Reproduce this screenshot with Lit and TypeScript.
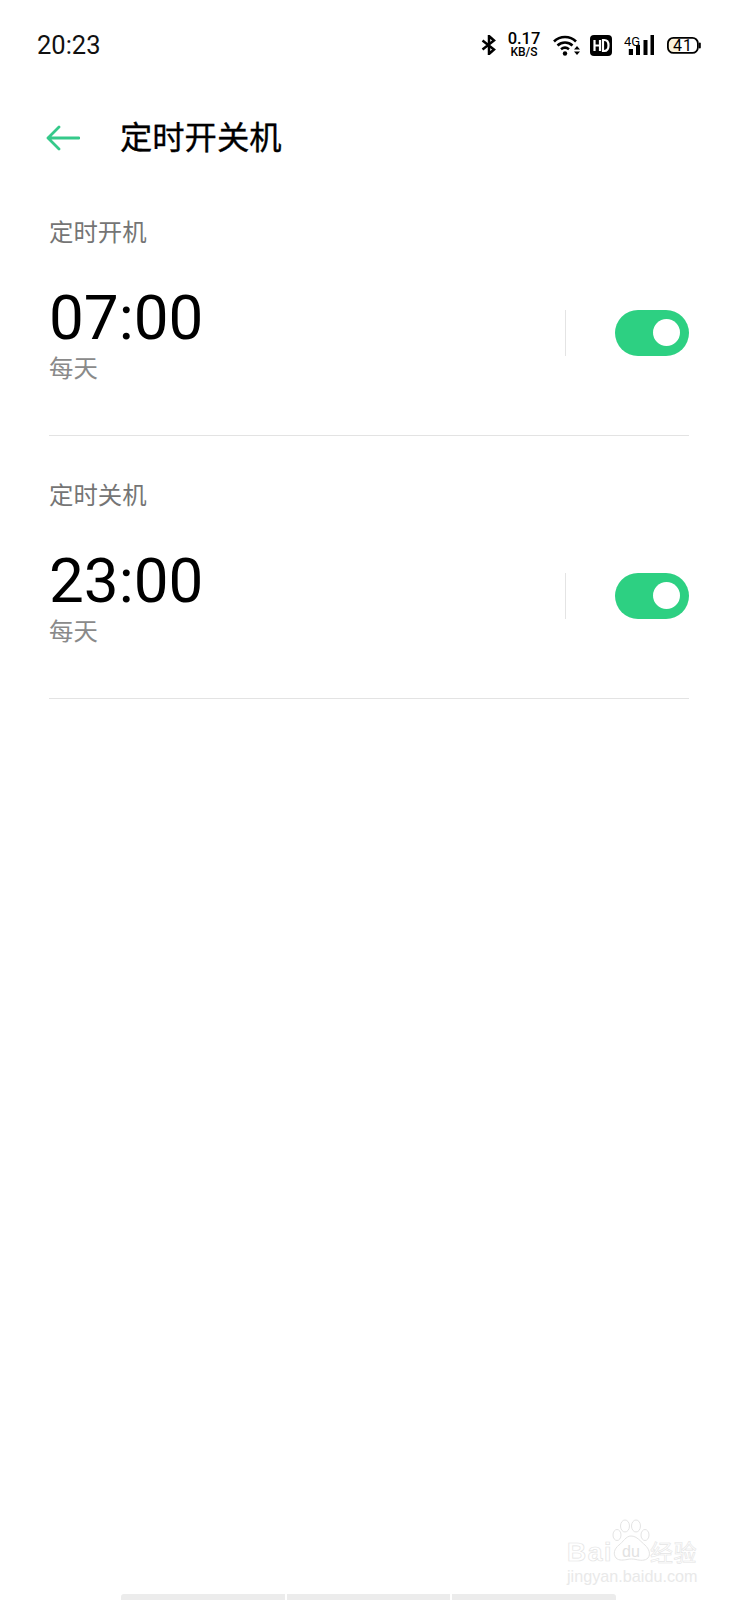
import { LitElement, html, css } from "lit";
import { customElement } from "lit/decorators.js";

const schedules = [
  { label: "定时开机", time: "07:00" },
  { label: "定时关机", time: "23:00" },
];

@customElement("app-root")
export class AppRoot extends LitElement {
  static styles = css`
    :host {
      display: flex;
      flex-direction: column;
      position: relative;
      width: 738px;
      height: 1600px;
      overflow: hidden;
      background: #fff;
      color: #000;
      font-family: Roboto, "Noto Sans CJK SC", sans-serif;
    }
    .status {
      display: flex;
      align-items: center;
      height: 46px;
      padding: 22px 37px 0 37px;
      flex: none;
    }
    .clock { font-size: 25.5px; line-height: 46px; flex: 1; color: #111; }
    .icons { display: flex; align-items: center; }
    .bt { width: 16px; height: 20px; margin-right: 10px; }
    .speed { display: flex; flex-direction: column; align-items: center; width: 34px; margin-right: 11px; }
    .speed b { font-size: 16.5px; line-height: 14px; font-weight: 500; }
    .speed span { font-size: 12px; line-height: 11px; font-weight: 500; margin-top: 1px; }
    .wifi { width: 29px; height: 22px; margin-right: 9px; }
    .hd { width: 22px; height: 21px; margin-right: 12px; display: block; }
    .sig { width: 30px; height: 22px; margin-right: 11px; }
    .bat { width: 36px; height: 20px; }
    .bar {
      display: flex;
      align-items: center;
      height: 60px;
      margin-top: 40px;
      padding-left: 46px;
      flex: none;
    }
    .back { width: 34px; height: 26px; margin-right: 40px; }
    .title { font-size: 32.3px; line-height: 60px; font-weight: 400; -webkit-text-stroke: 0.35px #000; }
    .list { padding-top: 5px; flex: 1; }
    .section {
      margin: 0 49px;
      border-bottom: 1px solid #e3e3e3;
      height: 263px;
      padding-top: 45px;
      box-sizing: border-box;
    }
    .label { font-size: 24.4px; line-height: 30px; color: #757575; }
    .row { display: flex; align-items: center; margin-top: 34px; }
    .left { flex: 1; }
    .time { font-size: 62px; line-height: 72px; }
    .sub { font-size: 24.4px; line-height: 29px; color: #8a8a8a; }
    .divider { width: 1px; height: 46px; background: #e4e4e4; margin-right: 49px; }
    .toggle {
      width: 74px;
      height: 46px;
      border-radius: 23px;
      background: #2dd082;
      display: flex;
      align-items: center;
      justify-content: flex-end;
      padding-right: 9px;
      box-sizing: border-box;
    }
    .knob { width: 27px; height: 27px; border-radius: 50%; background: #fff; }
    .nav {
      display: flex;
      gap: 2px;
      margin-left: 121px;
      width: 495px;
      height: 6px;
      flex: none;
    }
    .nav i { background: #ececec; flex: 1; }
    .nav i:first-child { border-radius: 3px 0 0 0; }
    .nav i:last-child { border-radius: 0 3px 0 0; }
    .mark {
      position: absolute;
      left: 567px;
      top: 1518px;
      width: 134px;
      height: 66px;
      color: #fff;
    }
    .mark svg { position: absolute; left: 44px; top: 0; width: 41px; height: 44px; }
    .bai {
      position: absolute; left: 0; top: 19px;
      font: 700 26.5px/30px "Liberation Sans", sans-serif;
      letter-spacing: 1.5px;
      -webkit-text-stroke: 0.7px #e4e4e4;
    }
    .jing {
      position: absolute; left: 83px; top: 22px;
      font-size: 23px; line-height: 28px; letter-spacing: 0.5px;
      -webkit-text-stroke: 0.6px #e4e4e4;
    }
    .url {
      position: absolute; left: 0; top: 48px;
      font: 16.2px/20px "Liberation Sans", sans-serif;
      color: #e9e9e9;
    }
  `;

  render() {
    return html`
      <div class="status">
        <div class="clock">20:23</div>
        <div class="icons">
          <svg class="bt" viewBox="0 0 16 20" fill="none" stroke="#000" stroke-width="2.5"><path d="M1.5 5.500 13 14.500 8 19V1l5 4.500L1.500 14.500"/></svg>
          <div class="speed"><b>0.17</b><span>KB/S</span></div>
          <svg class="wifi" viewBox="0 0 29 22" fill="none" stroke="#000" stroke-width="2.6">
            <path d="M2 7.500C8 1.500 18 1.500 24 7.500M5.500 11.500c4.500-4 10.500-4 15 0M9 15.300c2.500-2 5.500-2 8 0"/>
            <circle cx="13" cy="19.500" r="2.200" fill="#000" stroke="none"/>
            <path d="M22 15.500l3-3.500 3 3.500ZM22 17.500h6l-3 3.500Z" fill="#000" stroke="none"/>
          </svg>
          <svg class="hd" viewBox="0 0 22 21"><rect width="22" height="21" rx="4" fill="#000"/><path d="M4.500 5v11M10 5v11M4.500 10.500H10M13 5v11h1.200c2.800 0 4.300-1.500 4.300-5.500S17 5 14.200 5H13Z" fill="none" stroke="#fff" stroke-width="2.200"/></svg>
          <svg class="sig" viewBox="0 0 30 22"><text x="0" y="11.500" font-family="Roboto" font-size="13" font-weight="400">4G</text><rect x="4.800" y="15" width="4.200" height="6"/><rect x="12" y="11" width="4" height="10"/><rect x="19.500" y="6" width="4" height="15"/><rect x="26.500" y="1" width="3.500" height="20"/></svg>
          <svg class="bat" viewBox="0 0 36 20">
            <path d="M7 3h8v15H7a5 5 0 0 1-5-5V8a5 5 0 0 1 5-5Z" fill="#fdf4dc"/>
            <rect x="2.900" y="2.900" width="30" height="15" rx="5.500" fill="none" stroke="#000" stroke-width="1.800"/>
            <rect x="33.800" y="7.500" width="2" height="6" rx="1"/>
            <text x="18" y="16.300" text-anchor="middle" font-family="Roboto" font-size="16" font-weight="400" letter-spacing="1">41</text>
          </svg>
        </div>
      </div>
      <div class="bar">
        <svg class="back" viewBox="0 0 34 26" fill="none" stroke="#35c98a" stroke-width="2.800" stroke-linecap="round" stroke-linejoin="round"><path d="M33 13H2M13 2 2 13l11 11"/></svg>
        <div class="title">定时开关机</div>
      </div>
      <div class="list">
        ${schedules.map(
          (s) => html`
            <div class="section">
              <div class="label">${s.label}</div>
              <div class="row">
                <div class="left">
                  <div class="time">${s.time}</div>
                  <div class="sub">每天</div>
                </div>
                <div class="divider"></div>
                <div class="toggle"><div class="knob"></div></div>
              </div>
            </div>
          `
        )}
      </div>
      <div class="nav"><i></i><i></i><i></i></div>
      <div class="mark">
        <span class="bai">Bai</span>
        <svg viewBox="0 0 41 44" fill="#fff" stroke="#e4e4e4" stroke-width="1">
          <ellipse cx="14" cy="8" rx="4.500" ry="6"/><ellipse cx="25" cy="8" rx="4.500" ry="6"/>
          <ellipse cx="6" cy="17" rx="4" ry="5.500"/><ellipse cx="34" cy="17" rx="4" ry="5.500"/>
          <path d="M20 18c-5 0-8 6-12 9-5 4-6 9-3 13 3 3 8 2 11 1.500 3-.7 6-.7 9 0 4 1 9 1.500 12-1.500 3-4 1-9-3-13-4-3-8-9-14-9Z"/>
          <text x="20" y="39" text-anchor="middle" font-family="Liberation Sans" font-size="16" fill="#e2e2e2" stroke="none">du</text>
        </svg>
        <span class="jing">经验</span>
        <span class="url">jingyan.baidu.com</span>
      </div>
    `;
  }
}
